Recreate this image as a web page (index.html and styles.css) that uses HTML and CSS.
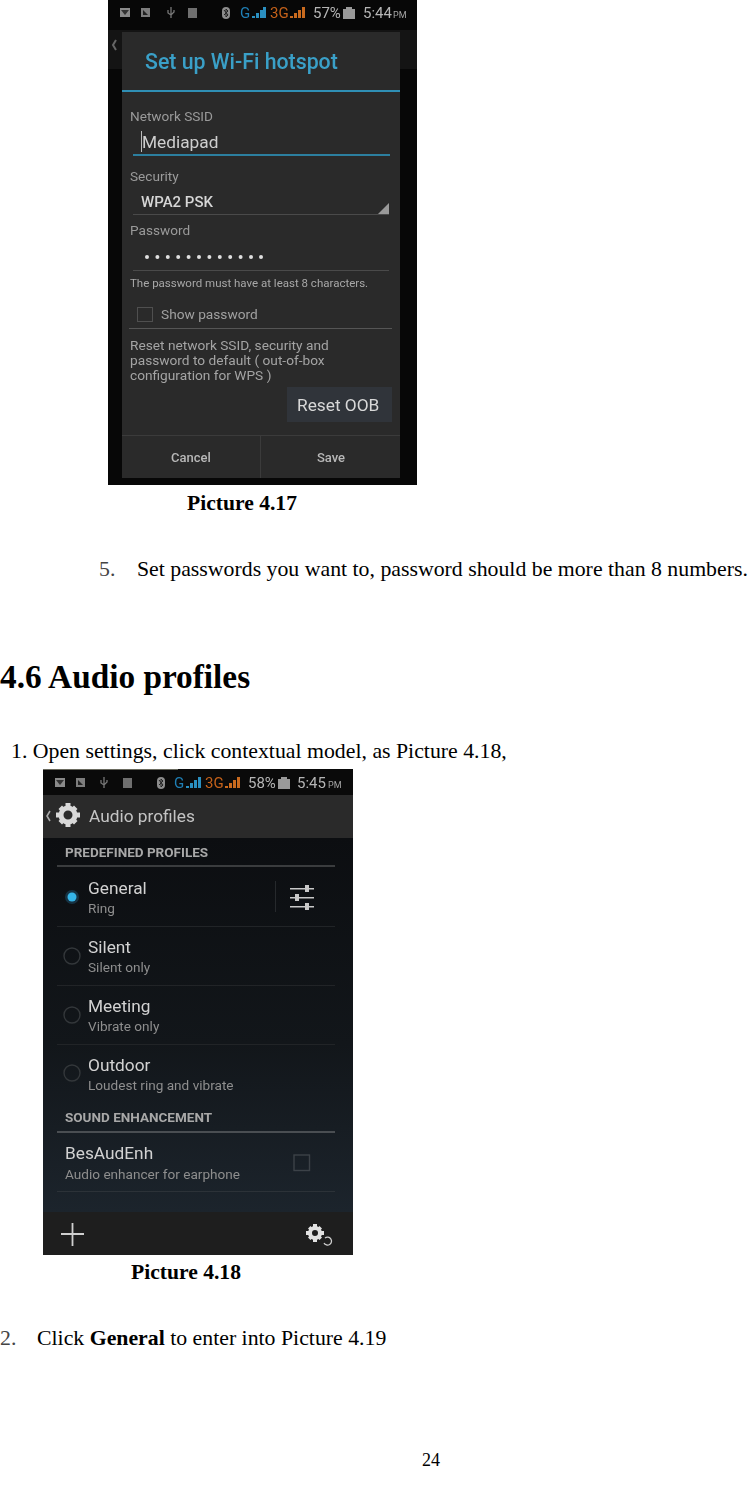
FILE: index.html
```html
<!DOCTYPE html>
<html lang="en">
<head>
<meta charset="utf-8">
<title>Audio profiles</title>
<link rel="stylesheet" href="styles.css">
</head>
<body>
<main class="page">
  <svg class="shot shot-a" viewBox="108 0 309 485" width="309" height="485" role="img" aria-label="Set up Wi-Fi hotspot dialog">
    <rect x="108" y="0" width="309" height="485" fill="#070707"/>
    <rect x="108" y="30" width="309" height="39" fill="#141414"/>
    <g class="status">
      <rect x="120" y="8" width="10" height="9" fill="#8a8a8a"/><path d="M121 10h8l-4 5z" fill="#333"/>
      <rect x="141" y="8" width="9" height="9" fill="#7d7d7d"/><path d="M143 10l5 5h-5z" fill="#222"/>
      <path d="M171 7v11M168 10v3l3 2 3-3v-2" fill="none" stroke="#777" stroke-width="1.3"/>
      <rect x="188" y="8" width="9" height="10" fill="#6f6f6f"/>
      <rect x="222" y="7" width="8" height="12" rx="4" fill="#8c8c8c"/><path d="M224 10l4 5-2 2v-8l2 2-4 4" fill="none" stroke="#222"/>
      <text x="240" y="18" class="st blue">G</text>
      <path d="M252 18h3v-2h-3zM256 18h3v-5h-3zM260 18h3v-8h-3zM263 18h3V7h-3z" fill="#2a8fc0"/>
      <text x="270" y="18" class="st orange">3G</text>
      <path d="M290 18h3v-2h-3zM294 18h3v-5h-3zM298 18h3v-8h-3zM302 18h3V7h-3z" fill="#c96a1e"/>
      <text x="313" y="18" class="st">57%</text>
      <rect x="343" y="9" width="12" height="10" fill="#999"/><rect x="346" y="7" width="6" height="2" fill="#999"/>
      <text x="363" y="18" class="st">5:44</text>
      <text x="393" y="18" class="st-s">PM</text>
    </g>
    <path d="M116 40l-3 5 3 5" fill="none" stroke="#666" stroke-width="2"/>
    <rect x="122" y="32" width="278" height="446" fill="#2a2a2a"/>
    <text x="145" y="69" class="d-title">Set up Wi-Fi hotspot</text>
    <rect x="122" y="90" width="278" height="2" fill="#2f8fb5"/>
    <text x="130" y="121" class="d-label">Network SSID</text>
    <rect x="141" y="131" width="1" height="21" fill="#bbb"/>
    <text x="142" y="148" class="d-input">Mediapad</text>
    <rect x="133" y="154" width="257" height="2" fill="#2c7f9f"/>
    <text x="130" y="181" class="d-label">Security</text>
    <text x="141" y="207" class="d-select">WPA2 PSK</text>
    <rect x="133" y="214" width="256" height="1" fill="#4a4a4a"/>
    <path d="M389 203v11h-11z" fill="#999"/>
    <text x="130" y="235" class="d-label">Password</text>
    <g fill="#e0e0e0">
      <circle cx="147" cy="257" r="2"/><circle cx="157.400" cy="257" r="2"/><circle cx="167.800" cy="257" r="2"/><circle cx="178.200" cy="257" r="2"/><circle cx="188.600" cy="257" r="2"/><circle cx="199" cy="257" r="2"/><circle cx="209.400" cy="257" r="2"/><circle cx="219.800" cy="257" r="2"/><circle cx="230.200" cy="257" r="2"/><circle cx="240.600" cy="257" r="2"/><circle cx="251" cy="257" r="2"/><circle cx="261" cy="257" r="2"/>
    </g>
    <rect x="133" y="270" width="256" height="1" fill="#4a4a4a"/>
    <text x="130" y="287" class="d-hint">The password must have at least 8 characters.</text>
    <rect x="137.500" y="307.500" width="15" height="14" fill="none" stroke="#4f4f4f"/>
    <text x="161" y="319" class="d-check">Show password</text>
    <rect x="129" y="328" width="263" height="1" fill="#555"/>
    <text class="d-body"><tspan x="130" y="350">Reset network SSID, security and</tspan><tspan x="130" y="365">password to default ( out-of-box</tspan><tspan x="130" y="380">configuration for WPS )</tspan></text>
    <rect x="287" y="387" width="105" height="35" fill="#30343a"/>
    <text x="297" y="411" class="d-reset">Reset OOB</text>
    <rect x="122" y="435" width="278" height="1" fill="#3b3b3b"/>
    <rect x="260" y="436" width="1" height="42" fill="#3b3b3b"/>
    <text x="191" y="462" class="d-btn">Cancel</text>
    <text x="331" y="462" class="d-btn">Save</text>
  </svg>

  <p class="caption caption-a">Picture 4.17</p>
  <p class="step step-a"><span class="num">5.</span><span>Set passwords you want to, password should be more than 8 numbers.</span></p>
  <h2 class="heading">4.6 Audio profiles</h2>
  <p class="intro">1. Open settings, click contextual model, as Picture 4.18,</p>

  <svg class="shot shot-b" viewBox="43 769 310 486" width="310" height="486" role="img" aria-label="Audio profiles settings screen">
    <defs>
      <linearGradient id="listbg" x1="0" y1="0" x2="0" y2="1">
        <stop offset="0" stop-color="#0c0e11"/><stop offset="0.55" stop-color="#12161a"/><stop offset="1" stop-color="#1c242c"/>
      </linearGradient>
    </defs>
    <rect x="43" y="769" width="310" height="486" fill="#0a0a0a"/>
    <rect x="43" y="769" width="135" height="1" fill="#6a6a5e"/>
    <g class="status">
      <rect x="55" y="778" width="10" height="9" fill="#8a8a8a"/><path d="M56 780h8l-4 5z" fill="#333"/>
      <rect x="76" y="778" width="9" height="9" fill="#7d7d7d"/><path d="M78 780l5 5h-5z" fill="#222"/>
      <path d="M104 777v11M101 780v3l3 2 3-3v-2" fill="none" stroke="#777" stroke-width="1.3"/>
      <rect x="123" y="778" width="9" height="10" fill="#6f6f6f"/>
      <rect x="157" y="777" width="8" height="12" rx="4" fill="#8c8c8c"/><path d="M159 780l4 5-2 2v-8l2 2-4 4" fill="none" stroke="#222"/>
      <text x="174" y="788" class="st blue">G</text>
      <path d="M186 788h3v-2h-3zM190 788h3v-5h-3zM194 788h3v-8h-3zM198 788h3v-11h-3z" fill="#2a8fc0"/>
      <text x="205" y="788" class="st orange">3G</text>
      <path d="M225 788h3v-2h-3zM229 788h3v-5h-3zM233 788h3v-8h-3zM237 788h3v-11h-3z" fill="#c96a1e"/>
      <text x="248" y="788" class="st">58%</text>
      <rect x="278" y="779" width="12" height="10" fill="#999"/><rect x="281" y="777" width="6" height="2" fill="#999"/>
      <text x="297" y="788" class="st">5:45</text>
      <text x="328" y="788" class="st-s">PM</text>
    </g>
    <rect x="43" y="795" width="310" height="43" fill="#2a2a2a"/>
    <path d="M50 811l-3 5 3 5" fill="none" stroke="#aaa" stroke-width="1.6"/>
    <g transform="translate(68 815)">
      <circle r="7" fill="none" stroke="#d8d8d8" stroke-width="5"/>
      <path d="M-2.500-12h5v4h-5zM-2.500 8h5v4h-5zM-12-2.500h4v5h-4zM8-2.500h4v5h-4zM-9.500-6l3.500-3.500 3 3-3.500 3.500zM9.500-6L6-9.500l-3 3 3.500 3.500zM-9.500 6L-6 9.500l3-3-3.500-3.500zM9.500 6L6 9.500l-3-3 3.500-3.500z" fill="#d8d8d8"/>
    </g>
    <text x="89" y="822" class="a-title">Audio profiles</text>
    <rect x="43" y="838" width="310" height="374" fill="url(#listbg)"/>
    <text x="65" y="857" class="a-sec">PREDEFINED PROFILES</text>
    <rect x="57" y="865" width="278" height="2" fill="#3a3c3e"/>

    <circle cx="72" cy="897" r="7" fill="#1d4a63" opacity="0.6"/><circle cx="72" cy="897" r="4.500" fill="#35b5e8"/>
    <text x="88" y="894" class="a-main">General</text>
    <text x="88" y="913" class="a-sub">Ring</text>
    <rect x="275" y="881" width="1" height="31" fill="#26292c"/>
    <g fill="#c8c8c8">
      <rect x="290" y="888" width="24" height="1.500"/><rect x="290" y="897" width="24" height="1.500"/><rect x="290" y="906" width="24" height="1.500"/>
      <rect x="305" y="885" width="4" height="7"/><rect x="295" y="894" width="4" height="7"/><rect x="305" y="903" width="4" height="7"/>
    </g>
    <rect x="57" y="926" width="278" height="1" fill="#212427"/>

    <circle cx="72" cy="956" r="8" fill="none" stroke="#33373a" stroke-width="1.400"/>
    <text x="88" y="953" class="a-main">Silent</text>
    <text x="88" y="972" class="a-sub">Silent only</text>
    <rect x="57" y="985" width="278" height="1" fill="#212427"/>

    <circle cx="72" cy="1015" r="8" fill="none" stroke="#33373a" stroke-width="1.400"/>
    <text x="88" y="1012" class="a-main">Meeting</text>
    <text x="88" y="1031" class="a-sub">Vibrate only</text>
    <rect x="57" y="1044" width="278" height="1" fill="#212427"/>

    <circle cx="72" cy="1073" r="8" fill="none" stroke="#33373a" stroke-width="1.400"/>
    <text x="88" y="1071" class="a-main">Outdoor</text>
    <text x="88" y="1090" class="a-sub">Loudest ring and vibrate</text>

    <text x="65" y="1122" class="a-sec">SOUND ENHANCEMENT</text>
    <rect x="57" y="1131" width="278" height="2" fill="#4a4e52"/>
    <text x="65" y="1159" class="a-main">BesAudEnh</text>
    <text x="65" y="1179" class="a-sub">Audio enhancer for earphone</text>
    <rect x="294" y="1155" width="15.500" height="15.500" fill="none" stroke="#3c4248" stroke-width="1.400"/>
    <rect x="57" y="1191" width="278" height="1" fill="#2c3238"/>

    <rect x="43" y="1212" width="310" height="43" fill="#1e1e1e"/>
    <path d="M61 1234h23M72.500 1223v23" stroke="#cfcfcf" stroke-width="1.800" fill="none"/>
    <g transform="translate(315 1233)">
      <circle r="5" fill="none" stroke="#e2e2e2" stroke-width="4"/>
      <path d="M-2-9h4v4h-4zM-2 5h4v4h-4zM-9-2h4v4h-4zM5-2h4v4h-4zM-7-4.500L-4.500-7l2.500 2.500L-4.500-2zM7-4.500L4.500-7 2-4.500 4.500-2zM-7 4.500L-4.500 7 -2 4.500-4.500 2zM7 4.500L4.500 7 2 4.500 4.500 2z" fill="#e2e2e2"/>
    </g>
    <path d="M325 1238a4 4 0 1 1 -1 5" fill="none" stroke="#cfcfcf" stroke-width="1.300"/>
  </svg>

  <p class="caption caption-b">Picture 4.18</p>
  <p class="step step-b"><span class="num">2.</span><span>Click <b>General</b> to enter into Picture 4.19</span></p>
  <p class="pageno">24</p>
</main>
</body>
</html>
```

FILE: styles.css
```css
html, body {
  margin: 0;
  padding: 0;
  background: #fff;
}
body {
  font-family: "Liberation Serif", "Times New Roman", serif;
  color: #000;
}
.page {
  width: 748px;
  height: 1494px;
  overflow: hidden;
  display: flex;
  flex-direction: column;
  align-items: flex-start;
  white-space: nowrap;
}
.shot {
  display: block;
  flex: none;
  filter: blur(0.7px);
}
.shot-a { margin-left: 108px; }
.shot-b { margin: 6px 0 0 43px; }

.caption {
  font-size: 21.6px;
  line-height: 24px;
  font-weight: 700;
}
.caption-a { margin: 6px 0 0 187px; }
.caption-b { margin: 5px 0 0 131px; }

.step {
  font-size: 21.8px;
  line-height: 24px;
  display: flex;
}
.step-a { margin: 42px 0 0 99px; }
.step-b { margin: 42px 0 0 0; }
.num {
  color: #444;
  width: 38px;
  flex: none;
}
.step-b .num { width: 37px; }

.heading {
  font-size: 33.3px;
  line-height: 38px;
  font-weight: 700;
  margin: 77px 0 0 0;
}
.intro {
  font-size: 21.8px;
  line-height: 24px;
  margin: 43px 0 0 11px;
}
.pageno {
  font-size: 18px;
  line-height: 20px;
  margin: 100px 0 0 422px;
}

/* screenshot text */
.shot text {
  font-family: Roboto, "Noto Sans", sans-serif;
}
.st { font-size: 15px; fill: #b5b5b5; }
.st-s { font-size: 9px; fill: #a5a5a5; }
.blue { fill: #1f7fb5; }
.orange { fill: #c4611a; }
.d-title { font-size: 21.3px; fill: #3aa0c8; font-weight: 500; }
.d-label { font-size: 13.6px; fill: #9a9a9a; }
.d-input { font-size: 17.3px; fill: #cfcfcf; }
.d-select { font-size: 15px; fill: #d6d6d6; font-weight: 500; }
.d-hint { font-size: 11.5px; fill: #a8a8a8; }
.d-check { font-size: 13.7px; fill: #a0a0a0; }
.d-body { font-size: 13.7px; fill: #a4a4a4; }
.d-reset { font-size: 17.3px; fill: #d8d8d8; }
.d-btn { font-size: 13px; fill: #b8b8b8; text-anchor: middle; font-weight: 500; }
.a-title { font-size: 17.3px; fill: #c4c4c4; }
.a-sec { font-size: 13.5px; fill: #a8a8a8; font-weight: 700; }
.a-main { font-size: 17.3px; fill: #d2d2d2; }
.a-sub { font-size: 13.6px; fill: #8e8e8e; }
```
